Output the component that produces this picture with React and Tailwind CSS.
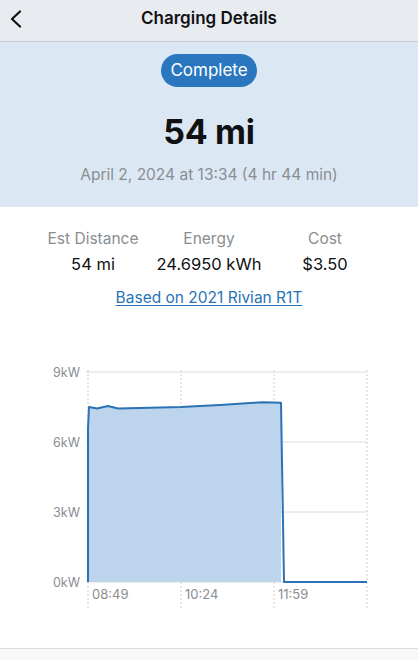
export default function App() {
  const Y0 = 355;
  const y = (v) => v - Y0;
  const gridY = [372, 442, 512, 582];
  const gridLabels = ["9kW", "6kW", "3kW", "0kW"];
  const vx = [88, 181, 274, 367];
  const curve = [
    [89, 407],
    [97, 408.5],
    [108, 406],
    [118, 408.5],
    [140, 408],
    [160, 407.5],
    [181, 407],
    [200, 406],
    [220, 405],
    [235, 404],
    [250, 403],
    [263, 402.3],
    [281, 402.7],
  ];
  const curveStr = curve.map(([a, b]) => `${a},${y(b)}`).join(" ");
  const linePts = `88,${y(582)} 88,${y(428)} ${curveStr} 284,${y(582)} 367,${y(582)}`;
  const fillPts = `88,${y(582)} 88,${y(428)} ${curveStr} 281,${y(582)}`;

  return (
    <div
      className="w-[418px] h-[660px] bg-white flex flex-col overflow-hidden"
      style={{ fontFamily: "Inter, 'Noto Sans', sans-serif" }}
    >
      <div className="h-[42px] shrink-0 bg-[#e8ecf1] border-b border-[#c8ccd1] relative flex items-center justify-center">
        <svg
          className="absolute left-[9px] top-[10px]"
          width="14"
          height="18"
          viewBox="0 0 14 18"
          fill="none"
        >
          <path d="M11 1.5 L3 9 L11 16.5" stroke="#111" strokeWidth="2.2" strokeLinecap="round" strokeLinejoin="round" />
        </svg>
        <span className="text-[17px] font-semibold text-[#111] leading-none -mt-[5px]">Charging Details</span>
      </div>

      <div className="h-[165px] shrink-0 bg-[#dbe8f4] flex flex-col items-center pt-[12px]">
        <div className="h-[33px] w-[96px] rounded-full bg-[#2a77bf] flex items-center justify-center text-white text-[17px] leading-none">
          Complete
        </div>
        <div className="mt-[25px] text-[34px] font-bold text-[#111] leading-[40px] tracking-[-0.3px]">54 mi</div>
        <div className="mt-[13px] text-[15.5px] text-[#8a8d91] leading-[20px]">April 2, 2024 at 13:34 (4 hr 44 min)</div>
      </div>

      <div className="flex flex-col items-center">
        <div className="mt-[22px] grid grid-cols-3 w-[348px] text-center">
          <div className="text-[15.5px] text-[#8a8d91] leading-[20px]">Est Distance</div>
          <div className="text-[15.5px] text-[#8a8d91] leading-[20px]">Energy</div>
          <div className="text-[15.5px] text-[#8a8d91] leading-[20px]">Cost</div>
          <div className="text-[16.5px] text-[#111] leading-[22px] mt-[4px]">54 mi</div>
          <div className="text-[16.5px] text-[#111] leading-[22px] mt-[4px]">24.6950 kWh</div>
          <div className="text-[16.5px] text-[#111] leading-[22px] mt-[4px]">$3.50</div>
        </div>
        <div className="mt-[13px] text-[15.5px] text-[#2a73b5] underline underline-offset-2 leading-[20px]">
          Based on 2021 Rivian R1T
        </div>
      </div>

      <svg className="mt-[47px] shrink-0" width="418" height="260" viewBox="0 0 418 260">
        {gridY.map((g, i) => (
          <line key={"h" + i} x1="86" x2="367" y1={y(g)} y2={y(g)} stroke="#dcdcdc" strokeWidth="1" />
        ))}
        {vx.map((x, i) => (
          <line key={"v" + i} x1={x} x2={x} y1={y(370)} y2={y(610)} stroke="#cfcfcf" strokeWidth="1" strokeDasharray="2 2" />
        ))}
        <polygon points={fillPts} fill="#bcd5ec" />
        <polyline points={linePts} fill="none" stroke="#2c72b5" strokeWidth="2" strokeLinejoin="round" />
        {gridY.map((g, i) => (
          <text key={"t" + i} x="80" y={y(g) + 4.5} textAnchor="end" fontSize="12.5" fill="#8a8d91" fontFamily="Inter, sans-serif">
            {gridLabels[i]}
          </text>
        ))}
        {["08:49", "10:24", "11:59"].map((t, i) => (
          <text key={"x" + i} x={vx[i] + 4} y={y(599)} fontSize="13" fill="#8a8d91" fontFamily="Inter, sans-serif">
            {t}
          </text>
        ))}
      </svg>

      <div className="mt-[33px] border-t border-[#dedede] bg-[#f8f8f8] flex-1" />
    </div>
  );
}
